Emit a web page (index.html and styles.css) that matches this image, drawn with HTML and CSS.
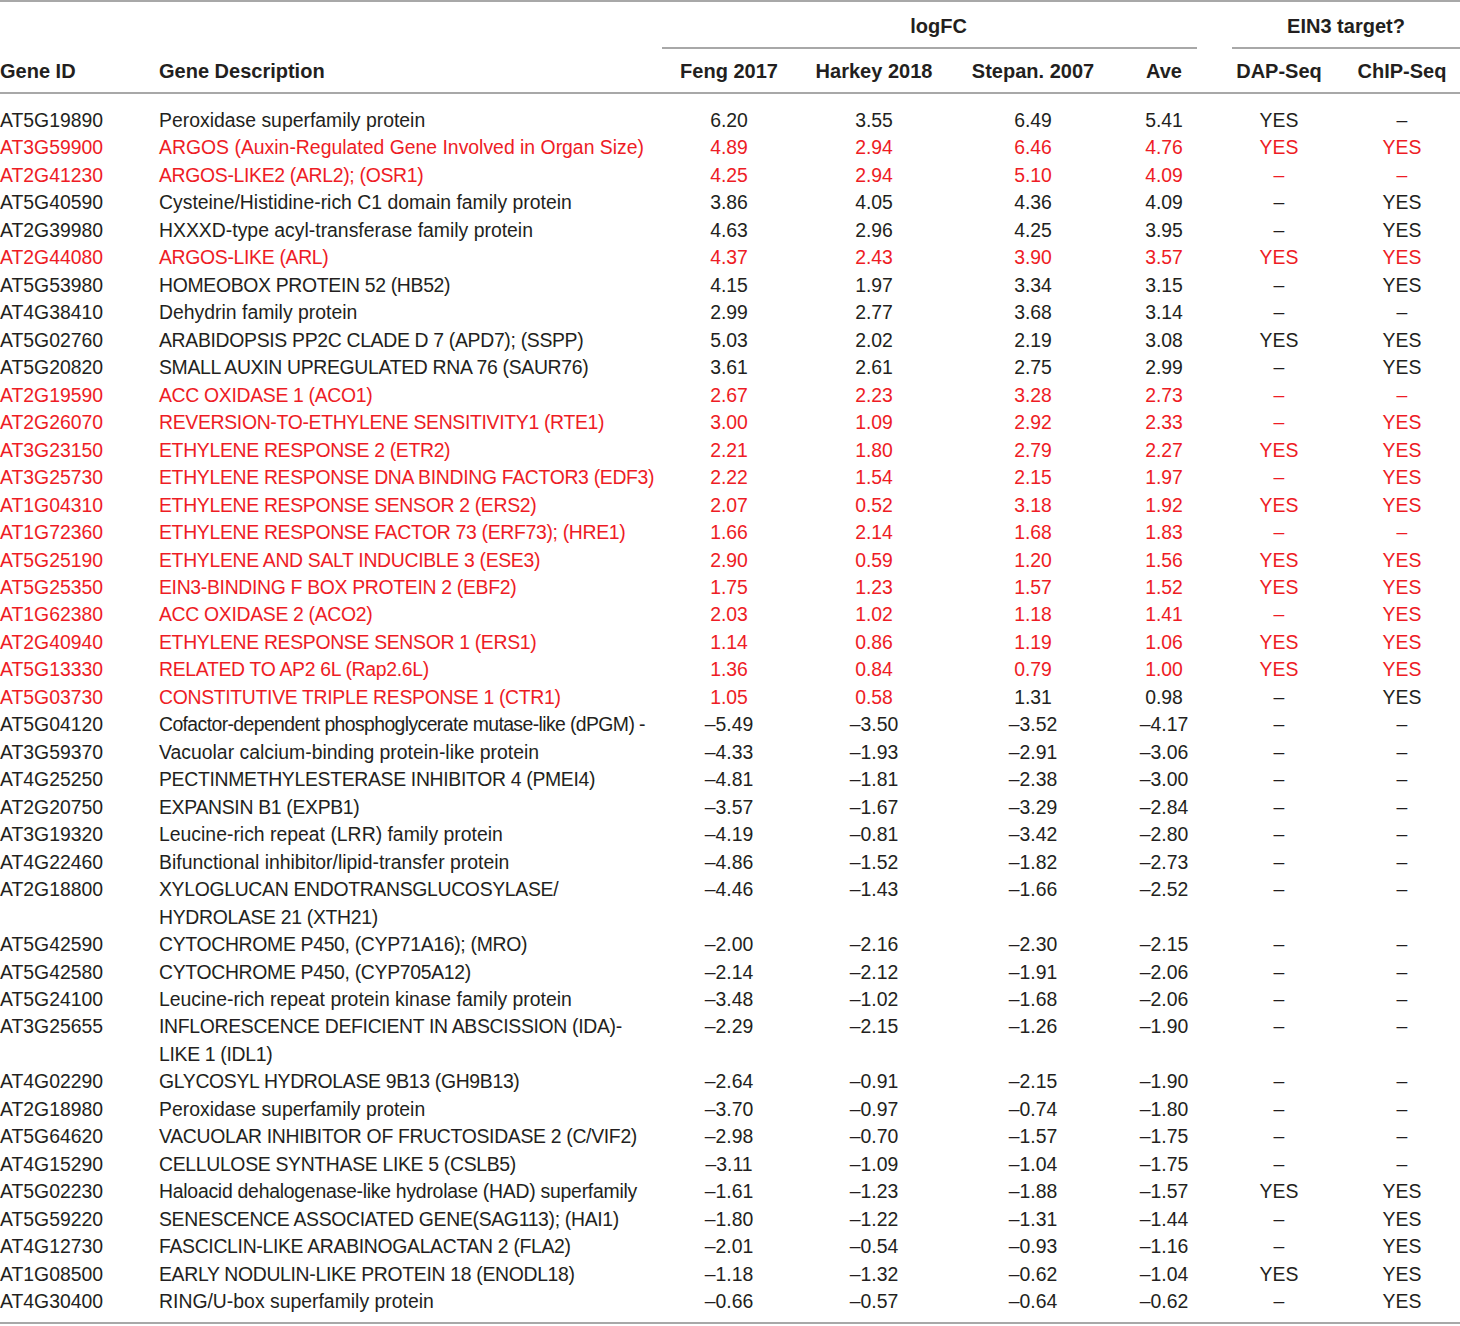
FILE: index.html
```html
<!DOCTYPE html>
<html>
<head>
<meta charset="utf-8">
<link rel="stylesheet" href="styles.css">
</head>
<body>
<div class="table">
  <div class="thead">
    <div class="hrow top">
      <div class="span-logfc">logFC</div>
      <div class="span-ein3">EIN3 target?</div>
    </div>
    <div class="hrow sub">
      <div>Gene ID</div>
      <div>Gene Description</div>
      <div class="c">Feng 2017</div>
      <div class="c">Harkey 2018</div>
      <div class="c">Stepan. 2007</div>
      <div class="c">Ave</div>
      <div class="c">DAP-Seq</div>
      <div class="c">ChIP-Seq</div>
    </div>
  </div>
  <div class="tbody">
    <div class="row"><span>AT5G19890</span><span>Peroxidase superfamily protein</span><span class="c">6.20</span><span class="c">3.55</span><span class="c">6.49</span><span class="c">5.41</span><span class="c">YES</span><span class="c">–</span></div>
    <div class="row red"><span>AT3G59900</span><span>ARGOS (Auxin-Regulated Gene Involved in Organ Size)</span><span class="c">4.89</span><span class="c">2.94</span><span class="c">6.46</span><span class="c">4.76</span><span class="c">YES</span><span class="c">YES</span></div>
    <div class="row red"><span>AT2G41230</span><span class="uc">ARGOS-LIKE2 (ARL2); (OSR1)</span><span class="c">4.25</span><span class="c">2.94</span><span class="c">5.10</span><span class="c">4.09</span><span class="c">–</span><span class="c">–</span></div>
    <div class="row"><span>AT5G40590</span><span>Cysteine/Histidine-rich C1 domain family protein</span><span class="c">3.86</span><span class="c">4.05</span><span class="c">4.36</span><span class="c">4.09</span><span class="c">–</span><span class="c">YES</span></div>
    <div class="row"><span>AT2G39980</span><span>HXXXD-type acyl-transferase family protein</span><span class="c">4.63</span><span class="c">2.96</span><span class="c">4.25</span><span class="c">3.95</span><span class="c">–</span><span class="c">YES</span></div>
    <div class="row red"><span>AT2G44080</span><span class="uc">ARGOS-LIKE (ARL)</span><span class="c">4.37</span><span class="c">2.43</span><span class="c">3.90</span><span class="c">3.57</span><span class="c">YES</span><span class="c">YES</span></div>
    <div class="row"><span>AT5G53980</span><span class="uc">HOMEOBOX PROTEIN 52 (HB52)</span><span class="c">4.15</span><span class="c">1.97</span><span class="c">3.34</span><span class="c">3.15</span><span class="c">–</span><span class="c">YES</span></div>
    <div class="row"><span>AT4G38410</span><span>Dehydrin family protein</span><span class="c">2.99</span><span class="c">2.77</span><span class="c">3.68</span><span class="c">3.14</span><span class="c">–</span><span class="c">–</span></div>
    <div class="row"><span>AT5G02760</span><span class="uc">ARABIDOPSIS PP2C CLADE D 7 (APD7); (SSPP)</span><span class="c">5.03</span><span class="c">2.02</span><span class="c">2.19</span><span class="c">3.08</span><span class="c">YES</span><span class="c">YES</span></div>
    <div class="row"><span>AT5G20820</span><span class="uc">SMALL AUXIN UPREGULATED RNA 76 (SAUR76)</span><span class="c">3.61</span><span class="c">2.61</span><span class="c">2.75</span><span class="c">2.99</span><span class="c">–</span><span class="c">YES</span></div>
    <div class="row red"><span>AT2G19590</span><span class="uc">ACC OXIDASE 1 (ACO1)</span><span class="c">2.67</span><span class="c">2.23</span><span class="c">3.28</span><span class="c">2.73</span><span class="c">–</span><span class="c">–</span></div>
    <div class="row red"><span>AT2G26070</span><span class="uc">REVERSION-TO-ETHYLENE SENSITIVITY1 (RTE1)</span><span class="c">3.00</span><span class="c">1.09</span><span class="c">2.92</span><span class="c">2.33</span><span class="c">–</span><span class="c">YES</span></div>
    <div class="row red"><span>AT3G23150</span><span class="uc">ETHYLENE RESPONSE 2 (ETR2)</span><span class="c">2.21</span><span class="c">1.80</span><span class="c">2.79</span><span class="c">2.27</span><span class="c">YES</span><span class="c">YES</span></div>
    <div class="row red"><span>AT3G25730</span><span class="uc">ETHYLENE RESPONSE DNA BINDING FACTOR3 (EDF3)</span><span class="c">2.22</span><span class="c">1.54</span><span class="c">2.15</span><span class="c">1.97</span><span class="c">–</span><span class="c">YES</span></div>
    <div class="row red"><span>AT1G04310</span><span class="uc">ETHYLENE RESPONSE SENSOR 2 (ERS2)</span><span class="c">2.07</span><span class="c">0.52</span><span class="c">3.18</span><span class="c">1.92</span><span class="c">YES</span><span class="c">YES</span></div>
    <div class="row red"><span>AT1G72360</span><span class="uc">ETHYLENE RESPONSE FACTOR 73 (ERF73); (HRE1)</span><span class="c">1.66</span><span class="c">2.14</span><span class="c">1.68</span><span class="c">1.83</span><span class="c">–</span><span class="c">–</span></div>
    <div class="row red"><span>AT5G25190</span><span class="uc">ETHYLENE AND SALT INDUCIBLE 3 (ESE3)</span><span class="c">2.90</span><span class="c">0.59</span><span class="c">1.20</span><span class="c">1.56</span><span class="c">YES</span><span class="c">YES</span></div>
    <div class="row red"><span>AT5G25350</span><span class="uc">EIN3-BINDING F BOX PROTEIN 2 (EBF2)</span><span class="c">1.75</span><span class="c">1.23</span><span class="c">1.57</span><span class="c">1.52</span><span class="c">YES</span><span class="c">YES</span></div>
    <div class="row red"><span>AT1G62380</span><span class="uc">ACC OXIDASE 2 (ACO2)</span><span class="c">2.03</span><span class="c">1.02</span><span class="c">1.18</span><span class="c">1.41</span><span class="c">–</span><span class="c">YES</span></div>
    <div class="row red"><span>AT2G40940</span><span class="uc">ETHYLENE RESPONSE SENSOR 1 (ERS1)</span><span class="c">1.14</span><span class="c">0.86</span><span class="c">1.19</span><span class="c">1.06</span><span class="c">YES</span><span class="c">YES</span></div>
    <div class="row red"><span>AT5G13330</span><span class="uc">RELATED TO AP2 6L (Rap2.6L)</span><span class="c">1.36</span><span class="c">0.84</span><span class="c">0.79</span><span class="c">1.00</span><span class="c">YES</span><span class="c">YES</span></div>
    <div class="row red"><span>AT5G03730</span><span class="uc">CONSTITUTIVE TRIPLE RESPONSE 1 (CTR1)</span><span class="c">1.05</span><span class="c">0.58</span><span class="c blk">1.31</span><span class="c blk">0.98</span><span class="c blk">–</span><span class="c blk">YES</span></div>
    <div class="row"><span>AT5G04120</span><span class="t1">Cofactor-dependent phosphoglycerate mutase-like (dPGM) -</span><span class="c">–5.49</span><span class="c">–3.50</span><span class="c">–3.52</span><span class="c">–4.17</span><span class="c">–</span><span class="c">–</span></div>
    <div class="row"><span>AT3G59370</span><span>Vacuolar calcium-binding protein-like protein</span><span class="c">–4.33</span><span class="c">–1.93</span><span class="c">–2.91</span><span class="c">–3.06</span><span class="c">–</span><span class="c">–</span></div>
    <div class="row"><span>AT4G25250</span><span class="uc">PECTINMETHYLESTERASE INHIBITOR 4 (PMEI4)</span><span class="c">–4.81</span><span class="c">–1.81</span><span class="c">–2.38</span><span class="c">–3.00</span><span class="c">–</span><span class="c">–</span></div>
    <div class="row"><span>AT2G20750</span><span class="uc">EXPANSIN B1 (EXPB1)</span><span class="c">–3.57</span><span class="c">–1.67</span><span class="c">–3.29</span><span class="c">–2.84</span><span class="c">–</span><span class="c">–</span></div>
    <div class="row"><span>AT3G19320</span><span>Leucine-rich repeat (LRR) family protein</span><span class="c">–4.19</span><span class="c">–0.81</span><span class="c">–3.42</span><span class="c">–2.80</span><span class="c">–</span><span class="c">–</span></div>
    <div class="row"><span>AT4G22460</span><span>Bifunctional inhibitor/lipid-transfer protein</span><span class="c">–4.86</span><span class="c">–1.52</span><span class="c">–1.82</span><span class="c">–2.73</span><span class="c">–</span><span class="c">–</span></div>
    <div class="row"><span>AT2G18800</span><span class="uc">XYLOGLUCAN ENDOTRANSGLUCOSYLASE/<br>HYDROLASE 21 (XTH21)</span><span class="c">–4.46</span><span class="c">–1.43</span><span class="c">–1.66</span><span class="c">–2.52</span><span class="c">–</span><span class="c">–</span></div>
    <div class="row"><span>AT5G42590</span><span class="uc">CYTOCHROME P450, (CYP71A16); (MRO)</span><span class="c">–2.00</span><span class="c">–2.16</span><span class="c">–2.30</span><span class="c">–2.15</span><span class="c">–</span><span class="c">–</span></div>
    <div class="row"><span>AT5G42580</span><span class="uc">CYTOCHROME P450, (CYP705A12)</span><span class="c">–2.14</span><span class="c">–2.12</span><span class="c">–1.91</span><span class="c">–2.06</span><span class="c">–</span><span class="c">–</span></div>
    <div class="row"><span>AT5G24100</span><span>Leucine-rich repeat protein kinase family protein</span><span class="c">–3.48</span><span class="c">–1.02</span><span class="c">–1.68</span><span class="c">–2.06</span><span class="c">–</span><span class="c">–</span></div>
    <div class="row"><span>AT3G25655</span><span class="uc">INFLORESCENCE DEFICIENT IN ABSCISSION (IDA)-<br>LIKE 1 (IDL1)</span><span class="c">–2.29</span><span class="c">–2.15</span><span class="c">–1.26</span><span class="c">–1.90</span><span class="c">–</span><span class="c">–</span></div>
    <div class="row"><span>AT4G02290</span><span class="uc">GLYCOSYL HYDROLASE 9B13 (GH9B13)</span><span class="c">–2.64</span><span class="c">–0.91</span><span class="c">–2.15</span><span class="c">–1.90</span><span class="c">–</span><span class="c">–</span></div>
    <div class="row"><span>AT2G18980</span><span>Peroxidase superfamily protein</span><span class="c">–3.70</span><span class="c">–0.97</span><span class="c">–0.74</span><span class="c">–1.80</span><span class="c">–</span><span class="c">–</span></div>
    <div class="row"><span>AT5G64620</span><span class="uc">VACUOLAR INHIBITOR OF FRUCTOSIDASE 2 (C/VIF2)</span><span class="c">–2.98</span><span class="c">–0.70</span><span class="c">–1.57</span><span class="c">–1.75</span><span class="c">–</span><span class="c">–</span></div>
    <div class="row"><span>AT4G15290</span><span class="uc">CELLULOSE SYNTHASE LIKE 5 (CSLB5)</span><span class="c">–3.11</span><span class="c">–1.09</span><span class="c">–1.04</span><span class="c">–1.75</span><span class="c">–</span><span class="c">–</span></div>
    <div class="row"><span>AT5G02230</span><span class="t2">Haloacid dehalogenase-like hydrolase (HAD) superfamily</span><span class="c">–1.61</span><span class="c">–1.23</span><span class="c">–1.88</span><span class="c">–1.57</span><span class="c">YES</span><span class="c">YES</span></div>
    <div class="row"><span>AT5G59220</span><span class="uc">SENESCENCE ASSOCIATED GENE(SAG113); (HAI1)</span><span class="c">–1.80</span><span class="c">–1.22</span><span class="c">–1.31</span><span class="c">–1.44</span><span class="c">–</span><span class="c">YES</span></div>
    <div class="row"><span>AT4G12730</span><span class="uc">FASCICLIN-LIKE ARABINOGALACTAN 2 (FLA2)</span><span class="c">–2.01</span><span class="c">–0.54</span><span class="c">–0.93</span><span class="c">–1.16</span><span class="c">–</span><span class="c">YES</span></div>
    <div class="row"><span>AT1G08500</span><span class="uc">EARLY NODULIN-LIKE PROTEIN 18 (ENODL18)</span><span class="c">–1.18</span><span class="c">–1.32</span><span class="c">–0.62</span><span class="c">–1.04</span><span class="c">YES</span><span class="c">YES</span></div>
    <div class="row"><span>AT4G30400</span><span>RING/U-box superfamily protein</span><span class="c">–0.66</span><span class="c">–0.57</span><span class="c">–0.64</span><span class="c">–0.62</span><span class="c">–</span><span class="c">YES</span></div>
  </div>
</div>
</body>
</html>
```

FILE: styles.css
```css
html, body {
  margin: 0;
  padding: 0;
  background: #ffffff;
}

body {
  font-family: "Liberation Sans", Arial, sans-serif;
  color: #231f20;
}

.table {
  width: 1460px;
}

.thead {
  border-top: 2px solid #a8a8a8;
  border-bottom: 2px solid #a8a8a8;
}

.hrow,
.row {
  display: grid;
  grid-template-columns: 159px 503px 134px 156px 162px 100px 130px 116px;
}

.hrow {
  font-weight: bold;
  font-size: 20px;
  line-height: 22px;
}

.hrow.top {
  height: 47px;
}

.span-logfc {
  grid-column: 3 / 7;
  margin-right: 17px;
  border-bottom: 2px solid #a8a8a8;
  text-align: center;
  padding: 13px 0 10px 18px;
}

.span-ein3 {
  grid-column: 7 / 9;
  margin-left: 18px;
  border-bottom: 2px solid #a8a8a8;
  text-align: center;
  padding: 13px 0 10px 0;
}

.hrow.sub {
  padding: 11px 0 10px;
}

.tbody {
  padding: 13px 0 6px;
  border-bottom: 2px solid #a8a8a8;
}

.row {
  font-size: 19.4px;
  line-height: 27.465px;
  align-items: start;
}

.row span {
  white-space: nowrap;
}

.uc {
  letter-spacing: -0.32px;
}

.t1 {
  letter-spacing: -0.6px;
}

.t2 {
  letter-spacing: -0.25px;
}

.c {
  text-align: center;
}

.red {
  color: #ee1c25;
}

.red .blk {
  color: #231f20;
}
```
